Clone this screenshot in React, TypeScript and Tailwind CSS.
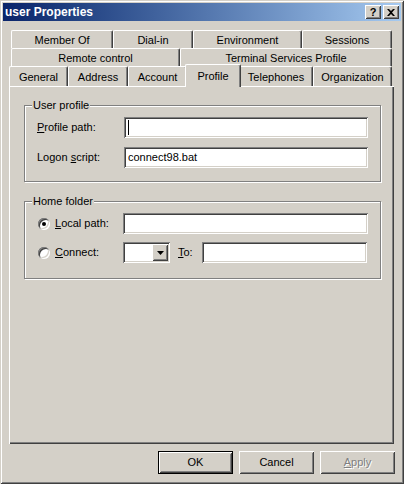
import type { ReactNode } from "react";

const raised =
  "shadow-[inset_1px_1px_#ffffff,inset_-1px_-1px_#404040,inset_2px_2px_#d4d0c8,inset_-2px_-2px_#808080]";
const sunken =
  "shadow-[inset_1px_1px_#808080,inset_-1px_-1px_#ffffff,inset_2px_2px_#404040,inset_-2px_-2px_#d4d0c8]";

type TabItem = { label: string; w: string; selected?: boolean };

const rows: { pad: string; tabs: TabItem[] }[] = [
  {
    pad: "px-[2px]",
    tabs: [
      { label: "Member Of", w: "w-[102px]" },
      { label: "Dial-in", w: "w-[80px]" },
      { label: "Environment", w: "w-[109px]" },
      { label: "Sessions", w: "w-[90px]" },
    ],
  },
  {
    pad: "px-[2px]",
    tabs: [
      { label: "Remote control", w: "w-[169px]" },
      { label: "Terminal Services Profile", w: "w-[212px]" },
    ],
  },
];

const frontRow: TabItem[] = [
  { label: "General", w: "w-[59px]" },
  { label: "Address", w: "w-[60px]" },
  { label: "Account", w: "w-[59px]" },
  { label: "Profile", w: "w-[52px]", selected: true },
  { label: "Telephones", w: "w-[74px]" },
  { label: "Organization", w: "w-[79px]" },
];

function Tab({ t, h }: { t: TabItem; h: string }) {
  if (t.selected) {
    return (
      <div className={`${t.w} ${h} relative z-10`}>
        <div className="-mx-[2px] -mt-[2px] flex h-[23px] items-start justify-center rounded-t-[2px] border-l border-t border-white border-r border-r-[#404040] bg-[#d4d0c8] pt-[3px] shadow-[inset_-1px_0_#808080]">
          {t.label}
        </div>
      </div>
    );
  }
  return (
    <div
      className={`${t.w} ${h} flex items-center justify-center rounded-t-[2px] border-l border-t border-white border-r border-r-[#404040] pt-[1px] shadow-[inset_-1px_0_#808080]`}
    >
      {t.label}
    </div>
  );
}

function Field({ w, children }: { w: string; children?: ReactNode }) {
  return (
    <div
      className={`${w} flex h-[21px] items-center bg-white pl-[4px] ${sunken}`}
    >
      {children}
    </div>
  );
}

function GroupBox({
  title,
  h,
  children,
}: {
  title: string;
  h: string;
  children: ReactNode;
}) {
  return (
    <div
      className={`relative ${h} w-[357px] border border-[#808080] shadow-[inset_1px_1px_#ffffff,1px_1px_#ffffff]`}
    >
      <span className="absolute -top-[8px] left-[7px] bg-[#d4d0c8] px-[1px] leading-[14px]">
        {title}
      </span>
      {children}
    </div>
  );
}

function Radio({ checked }: { checked?: boolean }) {
  return (
    <div
      className={`flex h-[12px] w-[12px] items-center justify-center rounded-full bg-white ${sunken}`}
    >
      {checked && <div className="h-[4px] w-[4px] rounded-full bg-black" />}
    </div>
  );
}

function Button({
  children,
  def,
  disabled,
}: {
  children: ReactNode;
  def?: boolean;
  disabled?: boolean;
}) {
  return (
    <div
      className={`flex h-[23px] w-[75px] items-center justify-center ${
        def ? "border border-black" : ""
      }`}
    >
      <div
        className={`flex h-full w-full items-center justify-center ${raised} ${
          disabled ? "text-[#808080] [text-shadow:1px_1px_0_#ffffff]" : ""
        }`}
      >
        {children}
      </div>
    </div>
  );
}

export default function App() {
  return (
    <div
      className={`flex h-[484px] w-[404px] flex-col bg-[#d4d0c8] p-[3px] font-['Liberation_Sans',Arial,sans-serif] text-[11px] text-black shadow-[inset_1px_1px_#d4d0c8,inset_-1px_-1px_#404040,inset_2px_2px_#ffffff,inset_-2px_-2px_#808080]`}
    >
      {/* title bar */}
      <div className="flex h-[18px] items-center bg-gradient-to-r from-[#0a246a] to-[#a6caf0] pl-[2px] pr-[2px]">
        <span className="flex-1 text-[12px] font-bold text-white">
          user Properties
        </span>
        <div
          className={`flex h-[14px] w-[16px] items-center justify-center bg-[#d4d0c8] text-[11px] font-bold leading-none ${raised}`}
        >
          ?
        </div>
        <div
          className={`ml-[2px] flex h-[14px] w-[16px] items-center justify-center bg-[#d4d0c8] ${raised}`}
        >
          <svg width="8" height="7" viewBox="0 0 8 7">
            <path
              d="M0 0h2l2 2 2-2h2L5 3.5 8 7H6L4 5 2 7H0l3-3.5z"
              fill="#000"
            />
          </svg>
        </div>
      </div>

      {/* tabs */}
      <div className="ml-[6px] mt-[9px] w-[385px]">
        {rows.map((r, i) => (
          <div key={i} className={`flex ${r.pad}`}>
            {r.tabs.map((t) => (
              <Tab key={t.label} t={t} h="h-[18px]" />
            ))}
          </div>
        ))}
        <div className="flex pr-[2px]">
          {frontRow.map((t) => (
            <Tab key={t.label} t={t} h="h-[20px]" />
          ))}
        </div>

        {/* page */}
        <div className="h-[358px] pl-[15px] pr-[13px] pt-[19px] shadow-[inset_1px_1px_#ffffff,inset_-1px_-1px_#404040,inset_-2px_-2px_#808080]">
          <GroupBox title="User profile" h="h-[77px]">
            <div className="flex flex-col gap-[9px] pl-[12px] pt-[11px]">
              <div className="flex items-center">
                <span className="w-[87px]">
                  <span className="underline">P</span>rofile path:
                </span>
                <Field w="w-[244px]">
                  <div className="h-[15px] w-[1px] bg-black" />
                </Field>
              </div>
              <div className="flex items-center">
                <span className="w-[87px]">
                  Logon <span className="underline">s</span>cript:
                </span>
                <Field w="w-[244px]">connect98.bat</Field>
              </div>
            </div>
          </GroupBox>

          <div className="mt-[19px]">
            <GroupBox title="Home folder" h="h-[78px]">
              <div className="flex flex-col gap-[8px] pl-[13px] pt-[11px]">
                <div className="flex items-center">
                  <Radio checked />
                  <span className="ml-[5px] w-[68px]">
                    <span className="underline">L</span>ocal path:
                  </span>
                  <Field w="w-[245px]" />
                </div>
                <div className="flex items-center">
                  <Radio />
                  <span className="ml-[5px] w-[68px]">
                    <span className="underline">C</span>onnect:
                  </span>
                  <div
                    className={`flex h-[21px] w-[47px] items-center justify-end bg-white pr-[2px] ${sunken}`}
                  >
                    <div
                      className={`flex h-[17px] w-[16px] items-center justify-center bg-[#d4d0c8] ${raised}`}
                    >
                      <svg width="7" height="4" viewBox="0 0 7 4">
                        <path d="M0 0h7L3.5 4z" fill="#000" />
                      </svg>
                    </div>
                  </div>
                  <span className="ml-[8px] w-[24px]">
                    <span className="underline">T</span>o:
                  </span>
                  <Field w="w-[165px]" />
                </div>
              </div>
            </GroupBox>
          </div>
        </div>
      </div>

      {/* buttons */}
      <div className="mr-[6px] mt-[7px] flex justify-end gap-[6px]">
        <Button def>OK</Button>
        <Button>Cancel</Button>
        <Button disabled>
          <span>
            <span className="underline">A</span>pply
          </span>
        </Button>
      </div>
    </div>
  );
}
